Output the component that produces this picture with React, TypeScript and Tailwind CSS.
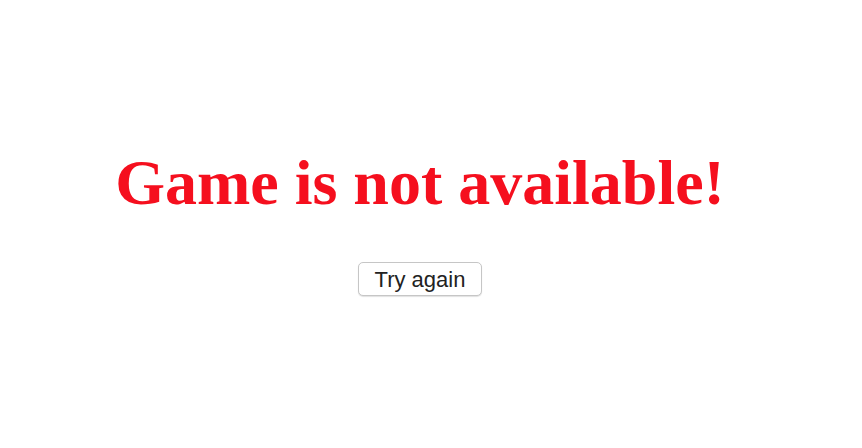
export default function App() {
  return (
    <div className="flex h-[448px] w-full flex-col items-center bg-white pr-[22px] pt-[146px]">
      <h1 className="font-['Liberation_Serif',serif] text-[64px] font-bold leading-[74px] text-[#f50f1e]">
        Game is not available!
      </h1>
      <button className="mt-[42px] h-[34px] rounded-[5px] border border-[#c6c6c6] bg-white px-[16px] font-['Liberation_Sans',sans-serif] text-[22px] text-[#222] shadow-[0_1px_1px_rgba(0,0,0,0.12)]">
        Try again
      </button>
    </div>
  );
}
